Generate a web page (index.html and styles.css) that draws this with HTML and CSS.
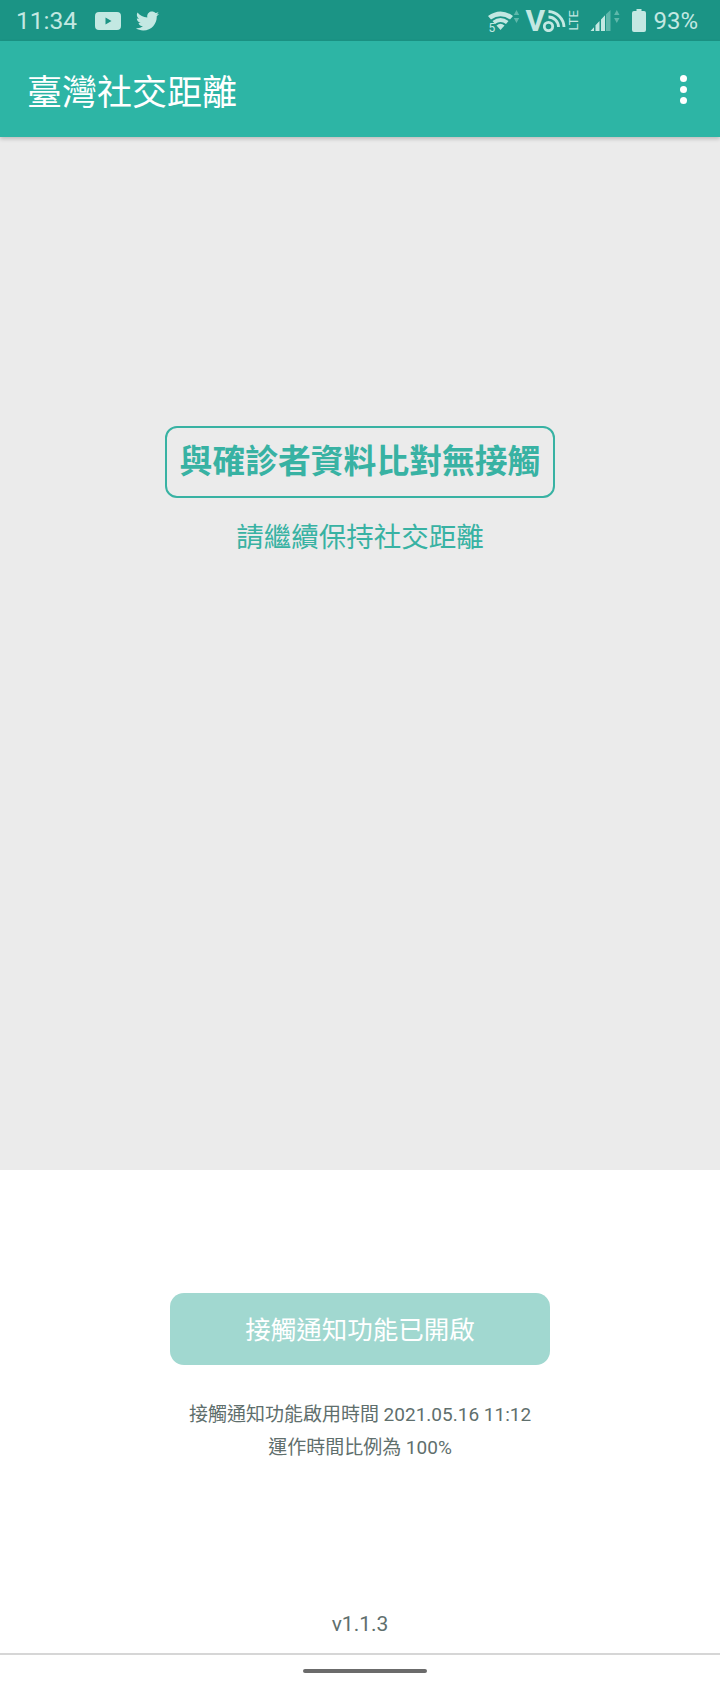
FILE: index.html
```html
<!DOCTYPE html>
<html>
<head>
  <title>臺灣社交距離</title>
  <link rel="stylesheet" href="styles.css">
</head>
<body>
  <div id="app">
    <div class="status-bar">
      <span class="clock">11:34</span>
      <svg class="icon-yt" viewBox="0 0 26 18"><path class="fill" fill-rule="evenodd" d="M4 0h18a4 4 0 0 1 4 4v10a4 4 0 0 1-4 4H4a4 4 0 0 1-4-4V4a4 4 0 0 1 4-4zM10.500 5.500v7l6-3.500z"/></svg>
      <svg class="icon-tw" viewBox="1 3.500 22 18"><path class="fill" d="M22.460 6c-.77.350-1.600.580-2.460.690.880-.530 1.560-1.370 1.880-2.380-.830.500-1.750.850-2.720 1.050C18.370 4.500 17.260 4 16 4c-2.350 0-4.270 1.920-4.270 4.290 0 .340.040.670.110.980C8.280 9.090 5.110 7.380 3 4.790c-.370.630-.580 1.370-.580 2.150 0 1.490.750 2.810 1.910 3.560-.710 0-1.370-.200-1.950-.500v.030c0 2.080 1.480 3.820 3.440 4.210a4.220 4.220 0 0 1-1.930.070 4.280 4.280 0 0 0 4 2.980 8.520 8.520 0 0 1-5.330 1.840c-.340 0-.680-.020-1.020-.060C3.440 20.290 5.700 21 8.120 21 16 21 20.330 14.460 20.330 8.790c0-.190 0-.370-.010-.560.840-.600 1.560-1.360 2.140-2.230z"/></svg>
      <div class="status-right">
        <svg class="icon-wifi" viewBox="0 0 32 22">
          <path class="fill" d="M0 6Q12.500-3 25 6L22 9.500Q12.500 3 3 9.500z"/>
          <path class="fill" d="M4.500 11Q12.500 5 20.500 11L18 14Q12.500 10 7 14z"/>
          <path class="fill" d="M8.500 15.500Q12.500 12 16.500 15.500L12.500 20z"/>
          <path class="dim" d="M28.500 0l2.700 5h-5.400zM25.800 8h5.400l-2.700 5z"/>
        </svg>
        <span class="wifi-five">5</span>
        <div class="volte">
          <span class="volte-v">V</span>
          <svg class="icon-wave" viewBox="0 0 24 22">
            <circle class="line" cx="5.500" cy="16.500" r="4.200"/>
            <path class="line" d="M5.500 1.500A16 16 0 0 1 21 17M5.500 7A10 10 0 0 1 15.500 17"/>
          </svg>
          <span class="volte-lte">LTE</span>
        </div>
        <svg class="icon-signal" viewBox="0 0 30 22">
          <path class="fill" d="M.5 21L4 17.300V21zM5.500 21V15.200L9.500 11V21zM11 21V9.500L15 5.300V21z"/>
          <path class="dim" d="M16 21V4.200L20.500 0V21zM26.800 0l2.700 5h-5.400zM24.100 8h5.400l-2.700 5z"/>
        </svg>
        <svg class="icon-batt" viewBox="0 0 14 23"><path class="fill" d="M4.500 0h5v2H12a2 2 0 0 1 2 2v17a2 2 0 0 1-2 2H2a2 2 0 0 1-2-2V4a2 2 0 0 1 2-2h2.500z"/></svg>
        <span class="batt-text">93%</span>
      </div>
    </div>

    <div class="app-bar">
      <span class="app-title">臺灣社交距離</span>
      <div class="menu-dots"><i></i><i></i><i></i></div>
    </div>

    <div class="result-panel">
      <div class="result-box">與確診者資料比對無接觸</div>
      <div class="result-hint">請繼續保持社交距離</div>
    </div>

    <div class="bottom-panel">
      <button class="notify-button" type="button">接觸通知功能已開啟</button>
      <p class="notify-info">接觸通知功能啟用時間 2021.05.16 11:12<br>運作時間比例為 100%</p>
      <div class="version">v1.1.3</div>
    </div>

    <div class="nav-bar"><div class="nav-pill"></div></div>
  </div>
</body>
</html>
```

FILE: styles.css
```css
body {
  margin: 0;
  background-color: #fff;
  font-family: Roboto, "Noto Sans CJK TC", sans-serif;
}

#app {
  display: flex;
  flex-direction: column;
  width: 720px;
  height: 1681px;
  overflow: hidden;
}

.fill {
  fill: #c3e8e2;
}

.dim {
  fill: #5fb8ab;
}

.line {
  fill: none;
  stroke: #c3e8e2;
  stroke-width: 2.800;
}

.status-bar {
  display: flex;
  align-items: center;
  flex: none;
  height: 41px;
  padding: 0 22px 0 16px;
  background-color: #1b9485;
  color: #c3e8e2;
}

.clock {
  width: 79px;
  font-size: 24.500px;
}

.icon-yt {
  width: 26px;
  height: 18px;
  margin-right: 14px;
}

.icon-tw {
  width: 25px;
  height: 20px;
}

.status-right {
  display: flex;
  align-items: center;
  margin-left: auto;
  position: relative;
}

.icon-wifi {
  width: 32px;
  height: 22px;
}

.wifi-five {
  position: absolute;
  left: 0;
  top: 15px;
  font-size: 12px;
  line-height: 14px;
}

.volte {
  display: flex;
  align-items: center;
  margin-left: 5px;
}

.volte-v {
  width: 18px;
  font-size: 30px;
  font-weight: 700;
  line-height: 30px;
}

.icon-wave {
  width: 24px;
  height: 22px;
}

.volte-lte {
  width: 12px;
  margin-left: 1px;
  font-size: 13px;
  line-height: 12px;
  writing-mode: vertical-rl;
  transform: rotate(180deg);
}

.icon-signal {
  width: 30px;
  height: 22px;
  margin-left: 10px;
}

.icon-batt {
  width: 14px;
  height: 23px;
  margin-left: 12px;
}

.batt-text {
  margin-left: 7px;
  font-size: 24px;
}

.app-bar {
  display: flex;
  align-items: center;
  justify-content: space-between;
  flex: none;
  height: 96px;
  padding: 0 33px 0 27px;
  background-color: #2db5a5;
  box-shadow: 0 2px 4px rgba(0, 0, 0, 0.2);
  position: relative;
  color: #fff;
}

.app-title {
  font-size: 35px;
}

.menu-dots {
  display: flex;
  flex-direction: column;
  gap: 4px;
}

.menu-dots i {
  width: 7px;
  height: 7px;
  border-radius: 50%;
  background-color: #fff;
}

.result-panel {
  display: flex;
  flex-direction: column;
  align-items: center;
  flex: none;
  box-sizing: border-box;
  height: 1033px;
  padding-top: 289px;
  background-color: #ebebeb;
  color: #38b2a3;
}

.result-box {
  box-sizing: border-box;
  width: 390px;
  height: 72px;
  border: 2px solid #38b2a3;
  border-radius: 12px;
  font-size: 32.800px;
  font-weight: 700;
  line-height: 68px;
  text-align: center;
}

.result-hint {
  margin-top: 20px;
  font-size: 27.500px;
  line-height: 40px;
}

.bottom-panel {
  display: flex;
  flex-direction: column;
  align-items: center;
  flex: 1;
  padding-top: 123px;
  color: #5f6f6d;
}

.notify-button {
  width: 380px;
  height: 72px;
  padding: 0 0 3px;
  border: none;
  border-radius: 14px;
  background-color: #a1d8d0;
  color: #fff;
  font-family: inherit;
  font-size: 25.500px;
}

.notify-info {
  margin: 33px 0 0;
  font-size: 19px;
  line-height: 33px;
  text-align: center;
}

.version {
  margin-top: auto;
  margin-bottom: 16px;
  font-size: 21px;
  line-height: 26px;
}

.nav-bar {
  display: flex;
  justify-content: center;
  flex: none;
  box-sizing: border-box;
  height: 28px;
  padding-top: 14px;
  border-top: 2px solid #d6d6d6;
}

.nav-pill {
  width: 124px;
  height: 4px;
  margin-left: 10px;
  border-radius: 2px;
  background-color: #6b6b6b;
}
```
